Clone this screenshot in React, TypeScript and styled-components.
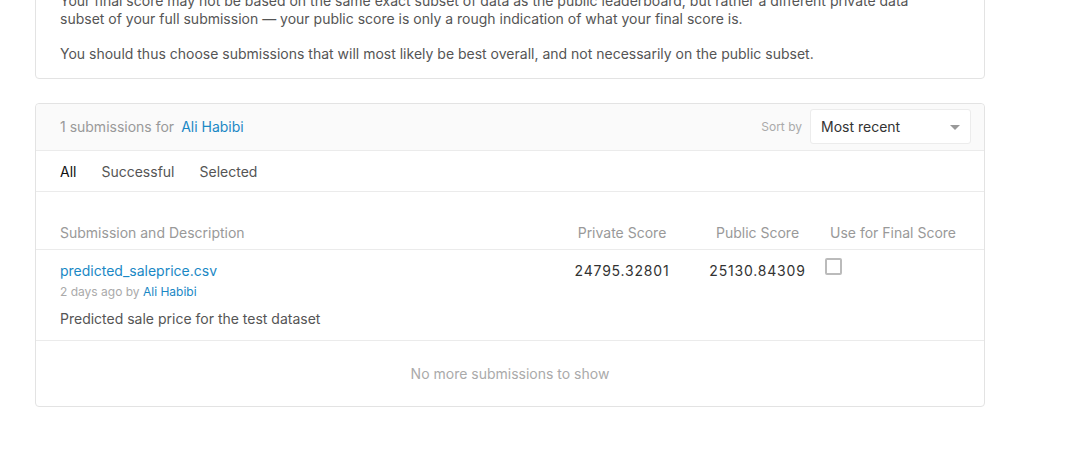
import React from "react";
import styled, { createGlobalStyle } from "styled-components";

const Global = createGlobalStyle`
  html, body { margin: 0; padding: 0; background: #fff; }
  body { font-family: Inter, "Noto Sans", Arial, sans-serif; font-size: 14px; color: #555; overflow: hidden; }
  * { box-sizing: border-box; }
`;

const Page = styled.div`
  width: 1074px;
  height: 465px;
  padding: 0 89px 0 35px;
  display: flex;
  flex-direction: column;
  gap: 24px;
`;

const Card = styled.section<{ $offsetTop?: number }>`
  width: 950px;
  border: 1px solid #e3e3e3;
  border-radius: 4px;
  background: #fff;
  margin-top: ${(p) => p.$offsetTop ?? 0}px;
`;

const InfoBody = styled.div`
  padding: 16px 24px 15px;
  display: flex;
  flex-direction: column;
  gap: 17px;
`;

const Para = styled.p`
  margin: 0;
  line-height: 18px;
  color: #555;
`;

const CardHeader = styled.div`
  height: 47px;
  background: #fafafa;
  border-bottom: 1px solid #ebebeb;
  display: flex;
  align-items: center;
  justify-content: space-between;
  padding: 0 13px 1px 24px;
  border-radius: 4px 4px 0 0;
`;

const Count = styled.div`
  color: #999;
  display: flex;
  gap: 7px;
`;

const Link = styled.a<{ $size?: number }>`
  color: #1a88c5;
  text-decoration: none;
  font-size: ${(p) => p.$size ?? 14}px;
`;

const SortWrap = styled.div`
  display: flex;
  align-items: center;
  gap: 8px;
`;

const SortLabel = styled.span`
  font-size: 12px;
  color: #aaa;
`;

const Select = styled.div`
  width: 161px;
  height: 35px;
  background: #fff;
  border: 1px solid #ececec;
  border-radius: 3px;
  display: flex;
  align-items: center;
  justify-content: space-between;
  padding: 0 10px 0 10px;
  color: #333;
  font-size: 14px;
`;

const Caret = styled.span`
  width: 0;
  height: 0;
  border-left: 5px solid transparent;
  border-right: 5px solid transparent;
  border-top: 5px solid #999;
  margin-top: 1px;
`;

const Tabs = styled.nav`
  height: 41px;
  display: flex;
  align-items: center;
  gap: 25px;
  padding: 0 24px;
  border-bottom: 1px solid #ebebeb;
`;

const Tab = styled.span<{ $active?: boolean }>`
  color: ${(p) => (p.$active ? "#111" : "#555")};
  font-size: 14px;
`;

const Row = styled.div<{ $head?: boolean }>`
  display: grid;
  grid-template-columns: 1fr 138px 125px 135px;
  padding: ${(p) => (p.$head ? "32px 24px 7px" : "12px 24px 12px")};
  border-bottom: 1px solid #ebebeb;
  align-items: start;
`;

const HeadCell = styled.div<{ $align?: string; $pr?: number; $pl?: number }>`
  color: #999;
  line-height: 18px;
  text-align: ${(p) => p.$align ?? "left"};
  padding-right: ${(p) => p.$pr ?? 0}px;
  padding-left: ${(p) => p.$pl ?? 0}px;
`;

const ScoreCell = styled.div<{ $pr?: number; $pl?: number }>`
  color: #333;
  line-height: 18px;
  letter-spacing: 0.8px;
  text-align: center;
  padding-right: ${(p) => p.$pr ?? 0}px;
  padding-left: ${(p) => p.$pl ?? 0}px;
`;

const SubCell = styled.div`
  display: flex;
  flex-direction: column;
`;

const FileName = styled(Link)`
  line-height: 18px;
`;

const Meta = styled.div`
  font-size: 12px;
  line-height: 16px;
  color: #aaa;
  margin-top: 4px;
`;

const Desc = styled.div`
  line-height: 18px;
  color: #555;
  margin-top: 10px;
`;

const Checkbox = styled.span`
  display: block;
  width: 17px;
  height: 17px;
  border: 2px solid #bbb;
  border-radius: 2px;
  margin-top: -4px;
`;

const Footer = styled.div`
  height: 65px;
  display: flex;
  align-items: center;
  justify-content: center;
  color: #aaa;
  font-size: 14px;
  padding-bottom: 1px;
`;

export default function App() {
  return (
    <>
      <Global />
      <Page>
        <Card $offsetTop={-25}>
          <InfoBody>
            <Para>
              Your final score may not be based on the same exact subset of data as the public leaderboard, but rather a different private data
              <br />
              subset of your full submission — your public score is only a rough indication of what your final score is.
            </Para>
            <Para>You should thus choose submissions that will most likely be best overall, and not necessarily on the public subset.</Para>
          </InfoBody>
        </Card>
        <Card>
          <CardHeader>
            <Count>
              1 submissions for <Link href="#">Ali Habibi</Link>
            </Count>
            <SortWrap>
              <SortLabel>Sort by</SortLabel>
              <Select>
                Most recent
                <Caret />
              </Select>
            </SortWrap>
          </CardHeader>
          <Tabs>
            <Tab $active>All</Tab>
            <Tab>Successful</Tab>
            <Tab>Selected</Tab>
          </Tabs>
          <Row $head>
            <HeadCell>Submission and Description</HeadCell>
            <HeadCell $align="center" $pr={18}>Private Score</HeadCell>
            <HeadCell $align="center" $pr={10}>Public Score</HeadCell>
            <HeadCell $pl={5}>Use for Final Score</HeadCell>
          </Row>
          <Row>
            <SubCell>
              <FileName href="#">predicted_saleprice.csv</FileName>
              <Meta>
                2 days ago by <Link href="#" $size={12}>Ali Habibi</Link>
              </Meta>
              <Desc>Predicted sale price for the test dataset</Desc>
            </SubCell>
            <ScoreCell $pr={18}>24795.32801</ScoreCell>
            <ScoreCell $pr={10}>25130.84309</ScoreCell>
            <div>
              <Checkbox />
            </div>
          </Row>
          <Footer>No more submissions to show</Footer>
        </Card>
      </Page>
    </>
  );
}
